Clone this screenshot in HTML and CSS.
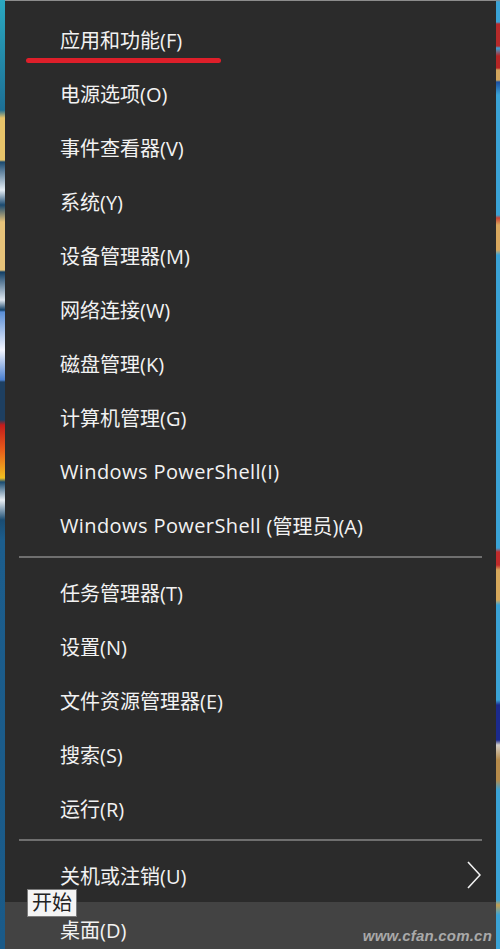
FILE: index.html
```html
<!DOCTYPE html>
<html lang="zh-CN">
<head>
<meta charset="utf-8">
<title>Win+X 菜单</title>
<link rel="stylesheet" href="styles.css">
</head>
<body>
<div class="screen">
  <div class="strip strip-left"></div>
  <div class="menu">
    <ul class="group">
      <li class="item item-marked">应用和功能(F)<span class="mark"></span></li>
      <li class="item">电源选项(O)</li>
      <li class="item">事件查看器(V)</li>
      <li class="item">系统(Y)</li>
      <li class="item">设备管理器(M)</li>
      <li class="item">网络连接(W)</li>
      <li class="item">磁盘管理(K)</li>
      <li class="item">计算机管理(G)</li>
      <li class="item"><span class="latin">Windows PowerShell(I)</span></li>
      <li class="item"><span class="latin">Windows PowerShell </span>(管理员)(A)</li>
    </ul>
    <div class="sep"></div>
    <ul class="group">
      <li class="item">任务管理器(T)</li>
      <li class="item">设置(N)</li>
      <li class="item">文件资源管理器(E)</li>
      <li class="item">搜索(S)</li>
      <li class="item">运行(R)</li>
    </ul>
    <div class="sep"></div>
    <ul class="group">
      <li class="item item-sub">关机或注销(U)
        <svg class="chev" width="14" height="28" viewBox="0 0 14 28"><path d="M1 1 L13 14 L1 27" fill="none" stroke="#f2f2f2" stroke-width="1.6"/></svg>
      </li>
      <li class="item item-hover">桌面(D)</li>
    </ul>
    <div class="tooltip">开始</div>
    <div class="watermark">www.cfan.com.cn</div>
  </div>
  <div class="strip strip-right"></div>
</div>
</body>
</html>
```
FILE: styles.css
```css
* { box-sizing: border-box; }
html, body {
  margin: 0;
  padding: 0;
  height: 100%;
  overflow: hidden;
}
body {
  font-family: "Open Sans", "Noto Sans CJK SC", sans-serif;
  background: #2b2b2b;
}
.screen {
  display: flex;
  height: 949px;
}
.strip {
  width: 5px;
  flex: none;
}
.strip-left {
  background: linear-gradient(to bottom,
    #2aa8c0 0, #1d6f95 110px,
    #e8c46a 118px, #e8c46a 160px,
    #1b4a70 162px, #e6eef5 190px, #1b4a70 205px,
    #e7c37a 222px, #e7c37a 270px,
    #123f66 272px, #dfe7ef 300px, #123f66 310px,
    #5a8ed6 312px, #f4f6ff 350px, #4a7fcf 380px,
    #1e3f60 382px, #1e3f60 420px,
    #c31c1c 425px, #e85d1a 450px, #f0c020 478px,
    #1a4c72 482px, #e9eef3 500px, #1a4c72 520px,
    #1c5d8c 540px, #1a5a88 949px);
}
.strip-right {
  width: 4px;
  background: linear-gradient(to bottom,
    #8a8a8a 0, #3aa3d6 2px, #3aa3d6 22px,
    #b62a2a 24px, #b62a2a 46px, #3aa3d6 48px,
    #b52525 56px, #b52525 68px, #d2a65e 70px, #d2a65e 80px,
    #1c4fa0 82px, #3aa3d6 95px, #3aa3d6 215px,
    #c94433 218px, #d9a85f 225px, #d9a85f 250px,
    #3aa3d6 255px, #3aa3d6 548px,
    #c02b2b 552px, #c02b2b 565px, #d6a85c 570px, #d6a85c 600px,
    #3aa3d6 605px, #3aa3d6 700px,
    #1b2a8c 705px, #1b2a8c 740px, #d4cfc8 745px, #b58a4a 760px, #b58a4a 780px,
    #3aa3d6 790px, #3aa3d6 900px, #c6a050 905px, #3aa3d6 915px);
}
.menu {
  position: relative;
  flex: 1;
  background: #2b2b2b;
  border-top: 1px solid #8c8c8c;
  padding-top: 11px;
  display: flex;
  flex-direction: column;
  overflow: hidden;
}
.menu > * { flex: none; }
.group {
  list-style: none;
  margin: 0;
  padding: 0;
}
.item {
  position: relative;
  height: 54px;
  display: flex;
  align-items: center;
  padding-left: 55px;
  color: #f2f2f2;
  font-size: 20px;
  white-space: nowrap;
}
.latin {
  white-space: pre;
  letter-spacing: 0.4px;
}
.mark {
  position: absolute;
  left: 21px;
  top: 46px;
  width: 195px;
  height: 5px;
  border-radius: 3px;
  background: #de1f2a;
}
.item-sub {
  justify-content: space-between;
  padding-right: 15px;
}
.chev { display: block; }
.item-hover {
  background: #434343;
}
.sep {
  height: 2px;
  margin: 4px 14px 7px 14px;
  background: #6f6f6f;
}
.tooltip {
  position: absolute;
  left: 22px;
  top: 888px;
  height: 28px;
  padding: 0 4px;
  background: #f4f4f4;
  border: 1px solid #7a7a7a;
  color: #222;
  font-size: 20px;
  line-height: 26px;
}
.watermark {
  position: absolute;
  right: 4px;
  bottom: 5px;
  color: #a9a9a9;
  font-family: "Liberation Sans", sans-serif;
  font-weight: bold;
  font-style: italic;
  font-size: 15px;
  letter-spacing: 0.2px;
}
```
